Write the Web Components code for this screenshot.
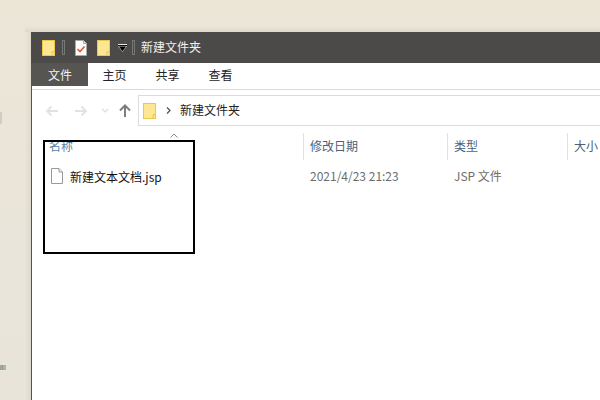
<!DOCTYPE html>
<html>
<head>
<meta charset="utf-8">
<style>
html, body { margin: 0; height: 100%; overflow: hidden; }
body { font: 12px "Noto Sans CJK SC", "Liberation Sans", sans-serif; }
</style>
</head>
<body>
<file-desktop>
  <file-window>
    <title-bar>新建文件夹</title-bar>
    <ribbon-tabs></ribbon-tabs>
    <address-bar>新建文件夹</address-bar>
    <column-header></column-header>
    <file-row name="新建文本文档.jsp" date="2021/4/23 21:23" type="JSP 文件"></file-row>
  </file-window>
</file-desktop>

<script>
const FOLDER = `<svg width="13" height="16" viewBox="0 0 13 16"><rect x=".5" y=".5" width="12" height="15" fill="#fee792" stroke="#ecc650"/><path d="M10 15.500v-4h2.500" fill="#f8dc7c" stroke="#ecc650"/></svg>`;

class FileDesktop extends HTMLElement {
    constructor() {
        super();
        this.attachShadow({mode: 'open'}).innerHTML = `
        <style>
        :host { display: block; position: relative; width: 600px; height: 400px; overflow: hidden;
            background: linear-gradient(180deg, #ece6d7 0, #ebe5d8 25%, #e8e4da 100%); }
        .speck { position: absolute; left: 0; }
        .speck.a { top: 112px; width: 2px; height: 12px; background: #cfccc5; }
        .speck.b { top: 365px; width: 6px; height: 5px; background: linear-gradient(90deg, #a3a39d 0 2px, #86a6a4 2px 3px, #cda37e 3px 4px, #b4b1aa 4px); }
        .shade { position: absolute; left: 25px; top: 32px; bottom: 0; width: 6px; background: linear-gradient(90deg, rgba(0,0,0,0), rgba(0,0,0,.05)); }
        .shade.top { left: 25px; right: 0; top: 26px; bottom: auto; width: auto; height: 6px; background: linear-gradient(180deg, rgba(0,0,0,0), rgba(0,0,0,.06)); }
        </style>
        <div class="speck a"></div>
        <div class="speck b"></div>
        <div class="shade"></div>
        <div class="shade top"></div>
        <slot></slot>`;
    }
}

class FileWindow extends HTMLElement {
    constructor() {
        super();
        this.attachShadow({mode: 'open'}).innerHTML = `
        <style>
        :host { position: absolute; left: 31px; top: 32px; width: 569px; height: 368px; display: flex;
            flex-direction: column; background: #fff; box-sizing: border-box; border-left: 1px solid #55534f; }
        .mark { position: absolute; left: 11px; top: 108px; width: 148px; height: 110px; border: 2px solid #000; }
        .sort { position: absolute; left: 138px; top: 101px; }
        </style>
        <slot></slot>
        <svg class="sort" width="8" height="5" viewBox="0 0 8 5"><path d="M.5 4.500L4 1l3.500 3.500" fill="none" stroke="#8a8a8a"/></svg>
        <div class="mark"></div>`;
    }
}

class TitleBar extends HTMLElement {
    constructor() {
        super();
        this.attachShadow({mode: 'open'}).innerHTML = `
        <style>
        :host { display: flex; align-items: center; height: 31px; flex: none; margin-left: -1px;
            padding: 0 0 0 11px; background: #4b4a48; color: #f1f1f1; font-size: 12px; }
        svg { flex: none; display: block; }
        .sep { width: 1px; height: 13px; border: 1px solid #777; flex: none; }
        .doc { margin: 0 10px; }
        .arrow { margin: 0 5px 0 8px; }
        .name { margin: 0 0 2px 6px; }
        </style>
        ${FOLDER}
        <span class="sep" style="margin-left:7px"></span>
        <svg class="doc" width="12" height="16" viewBox="0 0 12 16"><path d="M.5.5h8l3 3v12h-11z" fill="#fdfdfd" stroke="#a8a8a8"/><path d="M8.500.5v3h3" fill="#ddd" stroke="#a8a8a8"/><path d="M2.500 9l2.500 2.500 4.500-5" fill="none" stroke="#e8542c" stroke-width="1.600"/></svg>
        ${FOLDER}
        <svg class="arrow" width="9" height="8" viewBox="0 0 9 8"><rect y="0" width="9" height="1" fill="#e8e8e8"/><rect y="1" width="9" height="1" fill="#111"/><path d="M0 2h9L4.500 8z" fill="#c8c8c8"/><path d="M1 2.500h7L4.500 7.200z" fill="#000"/></svg>
        <span class="sep"></span>
        <span class="name"><slot></slot></span>`;
    }
}

class RibbonTabs extends HTMLElement {
    constructor() {
        super();
        this.attachShadow({mode: 'open'}).innerHTML = `
        <style>
        :host { display: flex; height: 27px; flex: none; box-sizing: border-box; border-bottom: 1px solid #d9d9d9;
            color: #222; font-size: 12px; }
        span { display: flex; align-items: center; justify-content: center; width: 53px; height: 23px; }
        .active { width: 56px; background: #565552; color: #f2f2f2; }
        </style>
        <span class="active">文件</span>
        <span>主页</span>
        <span>共享</span>
        <span>查看</span>`;
    }
}

class AddressBar extends HTMLElement {
    constructor() {
        super();
        this.attachShadow({mode: 'open'}).innerHTML = `
        <style>
        :host { display: flex; align-items: center; height: 31px; flex: none; padding: 5px 0 0 13px; color: #222; }
        .nav { display: flex; align-items: center; width: 93px; flex: none; }
        svg { display: block; flex: none; }
        .box { flex: 1; height: 29px; display: flex; align-items: center; border: 1px solid #dcdcdc; border-right: 0; padding-left: 4px; }
        .crumb { margin: 0 9px 0 10px; }
        .label { margin-bottom: 2px; }
        </style>
        <div class="nav">
            <svg width="14" height="12" viewBox="0 0 14 12" style="margin-right:15px"><path d="M13 6H2M6.500 1.500L2 6l4.500 4.500" fill="none" stroke="#e2e2e2" stroke-width="1.800"/></svg>
            <svg width="14" height="12" viewBox="0 0 14 12" style="margin-right:13px"><path d="M1 6h11M7.500 1.500L12 6l-4.500 4.500" fill="none" stroke="#e2e2e2" stroke-width="1.800"/></svg>
            <svg width="8" height="5" viewBox="0 0 8 5" style="margin-right:10px"><path d="M1 1l3 3 3-3" fill="none" stroke="#dcdcdc" stroke-width="1.200"/></svg>
            <svg width="12" height="13" viewBox="0 0 12 13"><path d="M6 13V2M1 6.500L6 1.500l5 5" fill="none" stroke="#7d7d7d" stroke-width="2"/></svg>
        </div>
        <div class="box">
            ${FOLDER}
            <svg class="crumb" width="5" height="7" viewBox="0 0 5 7"><path d="M1 .5l3 3-3 3" fill="none" stroke="#555" stroke-width="1.300"/></svg>
            <span class="label"><slot></slot></span>
        </div>`;
    }
}

class ColumnHeader extends HTMLElement {
    constructor() {
        super();
        this.attachShadow({mode: 'open'}).innerHTML = `
        <style>
        :host { display: grid; grid-template-columns: 271px 144px 120px 1fr; height: 27px; flex: none;
            margin-top: 7px; color: #4c607a; font-size: 12px; }
        span { display: flex; align-items: center; padding: 0 0 2px 6px; border-left: 1px solid #e1e1e1; white-space: nowrap; }
        span:first-of-type { border-left: 0; padding-left: 17px; color: #5b7fa6; }
        </style>
        <span>名称</span>
        <span>修改日期</span>
        <span>类型</span>
        <span>大小</span>`;
    }
}

class FileRow extends HTMLElement {
    constructor() {
        super();
        this.attachShadow({mode: 'open'}).innerHTML = `
        <style>
        :host { display: grid; grid-template-columns: 271px 144px 120px 1fr; align-items: center; height: 22px; flex: none;
            margin-top: 5px; color: #6d6d6d; font-size: 12px; }
        .name { display: flex; align-items: center; padding-left: 19px; color: #111; white-space: nowrap; }
        .name svg { margin-right: 7px; display: block; flex: none; }
        .cell { padding: 0 0 2px 7px; }
        </style>
        <div class="name">
            <svg width="12" height="16" viewBox="0 0 12 16"><path d="M.5.500h7.500l3.500 3.500v11.500h-11z" fill="#fff" stroke="#9a9a9a"/><path d="M8 .500v3.500h3.500" fill="#eee" stroke="#9a9a9a"/></svg>
            <span>${this.getAttribute('name')}</span>
        </div>
        <div class="cell">${this.getAttribute('date')}</div>
        <div class="cell">${this.getAttribute('type')}</div>`;
    }
}

customElements.define('file-desktop', FileDesktop);
customElements.define('file-window', FileWindow);
customElements.define('title-bar', TitleBar);
customElements.define('ribbon-tabs', RibbonTabs);
customElements.define('address-bar', AddressBar);
customElements.define('column-header', ColumnHeader);
customElements.define('file-row', FileRow);
</script>
</body>
</html>
